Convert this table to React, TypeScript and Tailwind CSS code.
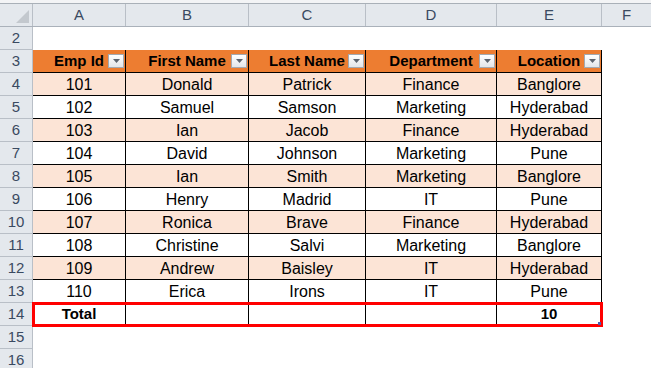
const rows = [
  ['101', 'Donald', 'Patrick', 'Finance', 'Banglore'],
  ['102', 'Samuel', 'Samson', 'Marketing', 'Hyderabad'],
  ['103', 'Ian', 'Jacob', 'Finance', 'Hyderabad'],
  ['104', 'David', 'Johnson', 'Marketing', 'Pune'],
  ['105', 'Ian', 'Smith', 'Marketing', 'Banglore'],
  ['106', 'Henry', 'Madrid', 'IT', 'Pune'],
  ['107', 'Ronica', 'Brave', 'Finance', 'Hyderabad'],
  ['108', 'Christine', 'Salvi', 'Marketing', 'Banglore'],
  ['109', 'Andrew', 'Baisley', 'IT', 'Hyderabad'],
  ['110', 'Erica', 'Irons', 'IT', 'Pune'],
];

const headers = ['Emp Id', 'First Name', 'Last Name', 'Department', 'Location'];
const widths = ['w-[93px]', 'w-[123px]', 'w-[117px]', 'w-[131px]', 'w-[105px]'];

function RowNum({ n }: { n: number }) {
  return (
    <div className="w-[33px] shrink-0 h-full flex items-center justify-center bg-[#e4e8ed] border-r border-b border-[#b9bfc7] text-[#3a4a61] text-[15px]">
      {n}
    </div>
  );
}

function FilterButton() {
  return (
    <div className="absolute right-[1px] top-[4px] w-[16px] h-[14px] border border-[#a3a9b1] bg-gradient-to-b from-white to-[#e3e6ea] flex items-center justify-center">
      <svg width="7" height="4" viewBox="0 0 7 4">
        <path d="M0 0h7L3.5 4z" fill="#5d6570" />
      </svg>
    </div>
  );
}

export default function App() {
  return (
    <div className="w-[651px] h-[368px] overflow-hidden bg-white font-['Liberation_Sans',Arial,sans-serif] text-[16px] text-black">
      <div className="h-[4px] bg-[#f3f4f6] border-b border-[#a9b0b8]" />

      {/* column letters */}
      <div className="flex h-[23px] bg-[#e4e8ed] border-b border-[#aab1ba] text-[#3a4a61] text-[15px]">
        <div className="w-[33px] shrink-0 border-r border-[#b9bfc7] relative">
          <svg className="absolute right-[3px] bottom-[3px]" width="13" height="13" viewBox="0 0 13 13">
            <path d="M13 0V13H0z" fill="#c3c8ce" />
          </svg>
        </div>
        {['A', 'B', 'C', 'D', 'E'].map((c, i) => (
          <div key={c} className={`${widths[i]} shrink-0 border-r border-[#b9bfc7] flex items-center justify-center`}>
            {c}
          </div>
        ))}
        <div className="flex-1 flex items-center justify-center">F</div>
      </div>

      {/* row 2 */}
      <div className="flex h-[23px]">
        <RowNum n={2} />
      </div>

      {/* row 3 header */}
      <div className="flex h-[23px]">
        <RowNum n={3} />
        {headers.map((h, i) => (
          <div
            key={h}
            className={`${widths[i]} shrink-0 relative bg-[#ed7d31] border-r border-b border-black flex items-center justify-center font-bold text-[15px]`}
          >
            {h}
            <FilterButton />
          </div>
        ))}
      </div>

      {rows.map((r, ri) => (
        <div key={r[0]} className="flex h-[23px]">
          <RowNum n={ri + 4} />
          {r.map((v, i) => (
            <div
              key={i}
              className={`${widths[i]} shrink-0 border-r border-b border-black flex items-center justify-center pt-[1px] ${ri % 2 === 0 ? 'bg-[#fce4d6]' : 'bg-white'}`}
            >
              {v}
            </div>
          ))}
        </div>
      ))}

      {/* total row */}
      <div className="flex h-[23px]">
        <RowNum n={14} />
        <div className="relative flex">
          {['Total', '', '', '', '10'].map((v, i) => (
            <div
              key={i}
              className={`${widths[i]} shrink-0 border-r border-b border-black flex items-center justify-center font-bold text-[15px]`}
            >
              {v}
            </div>
          ))}
          <div className="absolute left-[-1px] top-[-1px] w-[571px] h-[25px] border-[3px] border-[#ff0000] pointer-events-none">
            <div className="absolute right-[-1px] bottom-[-1px] w-[3px] h-[3px] bg-[#4a5fb0]" />
          </div>
        </div>
      </div>

      <div className="flex h-[23px]">
        <RowNum n={15} />
      </div>
      <div className="flex h-[23px]">
        <RowNum n={16} />
      </div>
    </div>
  );
}
